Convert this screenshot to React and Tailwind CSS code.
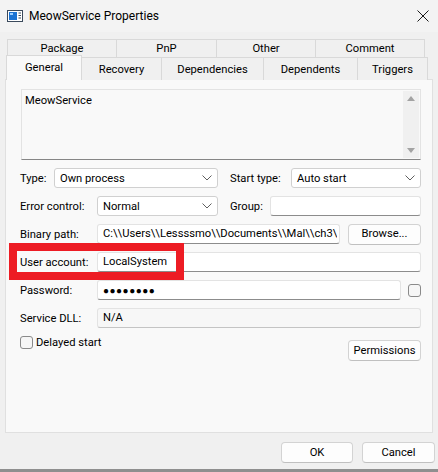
import React from 'react';

const font = { fontFamily: 'Roboto, "Noto Sans", sans-serif' };

const Chevron = () => (
  <svg width="10" height="6" viewBox="0 0 10 6" className="shrink-0">
    <polyline points="0.5,0.5 5,5 9.5,0.5" fill="none" stroke="#5f5f5f" strokeWidth="1" />
  </svg>
);

const Combo = ({ value, className }) => (
  <div className={`shrink-0 h-[20px] bg-white border border-[#d0d0d0] rounded-[3px] flex items-center justify-between pl-[5px] pr-[5px] ${className}`}>
    <span className="leading-none pt-[2px]">{value}</span>
    <Chevron />
  </div>
);

const Field = ({ value, className, disabled }) => (
  <div
    className={`shrink-0 h-[20px] border border-[#e3e3e3] border-b-[#8c8c8c] rounded-[3px] flex items-center pl-[5px] pt-[1px] overflow-hidden whitespace-nowrap ${
      disabled ? 'bg-[#f7f7f7] border-b-[#c4c4c4]' : 'bg-white'
    } ${className}`}
  >
    {value}
  </div>
);

const Button = ({ children, className }) => (
  <div className={`shrink-0 h-[21px] bg-[#fdfdfd] border border-[#d3d3d3] border-b-[#c0c0c0] rounded-[4px] flex items-center justify-center pt-[1px] ${className}`}>
    {children}
  </div>
);

const Check = ({ className }) => (
  <div className={`w-[13px] h-[13px] border border-[#8a8a8a] rounded-[3px] bg-[#f6f6f6] shrink-0 ${className}`} />
);

const Row = ({ children }) => <div className="flex items-center h-[20px] mt-[8px] whitespace-nowrap">{children}</div>;

const Label = ({ children, className }) => <span className={`shrink-0 whitespace-nowrap pt-[2px] ${className}`}>{children}</span>;

export default function App() {
  const backTabs = [
    ['Package', 'w-[110px]'],
    ['PnP', 'w-[101px]'],
    ['Other', 'w-[100px]'],
    ['Comment', 'w-[110px]'],
  ];
  const frontTabs = [
    ['Recovery', 'w-[80px]'],
    ['Dependencies', 'w-[102px]'],
    ['Dependents', 'w-[94px]'],
    ['Triggers', 'w-[70px]'],
  ];

  return (
    <div className="relative w-[438px] h-[472px] bg-[#f0f0f0] text-[11.2px] text-black overflow-hidden" style={font}>
      {/* Title bar */}
      <div className="h-[32px] bg-[#f3f3f3] flex items-center pl-[7px] pr-[8px]">
        <svg width="16" height="12" viewBox="0 0 16 12" className="shrink-0">
          <rect x="0.5" y="0.5" width="15" height="11" fill="#ffffff" stroke="#3b4a5c" />
          <rect x="2" y="2" width="8" height="8" fill="#1b73d3" />
          <rect x="3" y="3" width="3" height="2" fill="#9fd0ff" />
          <rect x="11.5" y="2.5" width="2.5" height="1" fill="#3b4a5c" />
          <rect x="11.5" y="5" width="2.5" height="1" fill="#3b4a5c" />
          <rect x="11.5" y="7.5" width="2.5" height="1" fill="#3b4a5c" />
        </svg>
        <span className="ml-[6px] text-[12px]">MeowService Properties</span>
        <svg width="12" height="12" viewBox="0 0 12 12" className="ml-auto mr-[1px]">
          <path d="M0.5 0.5 L11.5 11.5 M11.5 0.5 L0.5 11.5" stroke="#1a1a1a" strokeWidth="1" />
        </svg>
      </div>

      {/* Tabs */}
      <div className="pt-[7px]">
        <div className="flex ml-[7px] h-[18px]">
          {backTabs.map(([t, w]) => (
            <div key={t} className={`${w} border border-b-0 border-[#d9d9d9] -ml-px first:ml-0 flex items-center justify-center bg-[#f0f0f0] pt-[2px]`}>
              {t}
            </div>
          ))}
        </div>
        <div className="flex items-end ml-[6px] h-[23px]">
          <div className="relative z-10 w-[76px] h-[25px] bg-[#f9f9f9] border border-b-0 border-[#d9d9d9] flex items-start justify-center pt-[4px]">
            General
          </div>
          {frontTabs.map(([t, w]) => (
            <div key={t} className={`${w} h-[23px] border border-b-0 border-l-0 border-[#d9d9d9] flex items-center justify-center bg-[#f0f0f0] pt-[2px]`}>
              {t}
            </div>
          ))}
        </div>

        {/* Panel */}
        <div className="-mt-px ml-[5px] w-[428px] h-[354px] bg-[#f9f9f9] border border-[#e0e0e0] pl-[14px] pt-[9px]">
          <div className="ml-px w-[400px] h-[71px] border border-[#e3e3e3] border-b-[#868686] bg-[#f9f9f9] flex">
            <div className="flex-1 pl-[3px] pt-[3px]">MeowService</div>
            <div className="w-[16px] my-px mr-px bg-[#f0f0f0] flex flex-col items-center justify-between py-[5px]">
              <svg width="8" height="5" viewBox="0 0 8 5">
                <polygon points="4,0 8,5 0,5" fill="#a3a3a3" />
              </svg>
              <svg width="8" height="5" viewBox="0 0 8 5">
                <polygon points="0,0 8,0 4,5" fill="#a3a3a3" />
              </svg>
            </div>
          </div>

          <div className="mt-[1px]">
            <Row>
              <Label className="w-[34px]">Type:</Label>
              <Combo value="Own process" className="w-[164px]" />
              <Label className="w-[73px] pl-[12px]">Start type:</Label>
              <Combo value="Auto start" className="w-[130px]" />
            </Row>
            <Row>
              <Label className="w-[77px]">Error control:</Label>
              <Combo value="Normal" className="w-[121px]" />
              <Label className="w-[52px] pl-[12px]">Group:</Label>
              <Field value="" className="w-[151px]" />
            </Row>
            <Row>
              <Label className="w-[77px]">Binary path:</Label>
              <Field
                value={<span className="block w-[234px] overflow-hidden">C:\\Users\\Lessssmo\\Documents\\Mal\\ch3\\005</span>}
                className="w-[243px]"
              />
              <Button className="w-[73px] ml-[8px]">Browse...</Button>
            </Row>
            <Row>
              <Label className="w-[77px]">User account:</Label>
              <Field value="LocalSystem" className="w-[324px]" />
            </Row>
            <Row>
              <Label className="w-[77px]">Password:</Label>
              <Field value={<span className="tracking-[0.5px] text-[10px]">●●●●●●●●</span>} className="w-[304px]" />
              <Check className="ml-[7px]" />
            </Row>
            <Row>
              <Label className="w-[77px]">Service DLL:</Label>
              <Field value="N/A" className="w-[324px]" disabled />
            </Row>
          </div>

          <div className="flex justify-between items-start mt-[6px] w-[401px]">
            <div className="flex items-center">
              <Check />
              <span className="ml-[3px] pt-[1px]">Delayed start</span>
            </div>
            <Button className="w-[73px] mt-[6px]">Permissions</Button>
          </div>
        </div>
      </div>

      {/* Bottom buttons */}
      <div className="flex justify-end mt-[9px] pr-[3px] gap-[9px]">
        <Button className="w-[72px] border-[#005fb8] border-b-[#005fb8]">OK</Button>
        <Button className="w-[73px]">Cancel</Button>
      </div>
      <div className="absolute left-0 right-0 top-[469px] h-[3px] bg-[#8f8f8f]" />

      {/* Annotation */}
      <div className="absolute left-[9px] top-[243px] w-[175px] h-[37px] border-[8px] border-[#ed1c24]" />
    </div>
  );
}
